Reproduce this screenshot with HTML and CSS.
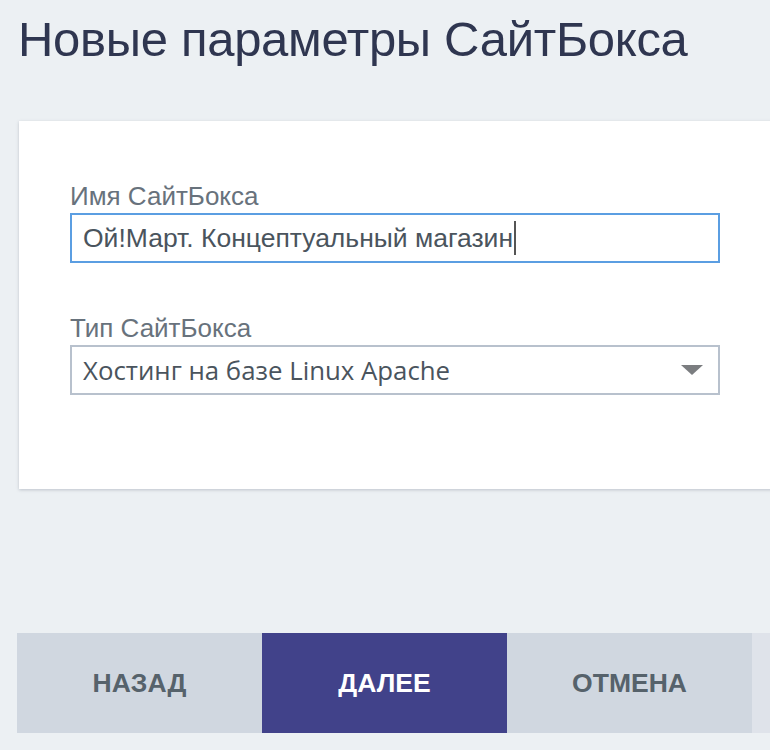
FILE: index.html
```html
<!DOCTYPE html>
<html lang="ru">
<head>
<meta charset="utf-8">
<title>Новые параметры СайтБокса</title>
<link rel="stylesheet" href="styles.css">
</head>
<body>
<div class="page">
  <h1 class="title">Новые параметры СайтБокса</h1>
  <div class="card">
    <div class="field">
      <div class="label">Имя СайтБокса</div>
      <div class="input focused"><span class="value">Ой!Март. Концептуальный магазин</span><span class="caret"></span></div>
    </div>
    <div class="field">
      <div class="label">Тип СайтБокса</div>
      <div class="input select">
        <span class="value sel">Хостинг на базе Linux Apache</span>
        <svg class="arrow" width="22" height="10" viewBox="0 0 22 10"><polygon points="0,0 22,0 11,10" fill="#7b7d80"/></svg>
      </div>
    </div>
  </div>
  <div class="actions">
    <div class="btn">НАЗАД</div>
    <div class="btn primary">ДАЛЕЕ</div>
    <div class="btn">ОТМЕНА</div>
    <div class="btn ghost"></div>
  </div>
</div>
</body>
</html>
```
FILE: styles.css
```css
html, body {
  margin: 0;
  padding: 0;
  background: #ecf0f3;
  overflow: hidden;
  height: 750px;
}
.page {
  padding-left: 18px;
  font-family: "Liberation Sans", Arial, sans-serif;
  overflow: hidden;
  height: 750px;
}
.title {
  margin: 0;
  padding-top: 11px;
  font-weight: normal;
  font-size: 49px;
  line-height: 56px;
  color: #2f3650;
  letter-spacing: -0.3px;
  white-space: nowrap;
}
.card {
  margin-top: 54px;
  margin-left: 1px;
  margin-right: -60px;
  height: 368px;
  background: #fff;
  box-shadow: 0 1px 3px rgba(120, 130, 145, 0.4);
  padding: 58px 0 0 51px;
  box-sizing: border-box;
}
.field {
  margin-bottom: 48px;
}
.label {
  font-size: 26px;
  line-height: 34px;
  color: #68727c;
}
.input {
  width: 650px;
  height: 50px;
  box-sizing: border-box;
  border: 2px solid #b8c1cd;
  display: flex;
  align-items: center;
  padding-left: 11px;
  position: relative;
}
.input.focused {
  border-color: #5b9ee2;
}
.value {
  font-size: 26.5px;
  color: #4a545d;
}
.caret {
  display: inline-block;
  width: 2px;
  height: 34px;
  background: #555;
  margin-left: 1px;
}
.select {
  justify-content: space-between;
  padding-right: 15px;
}
.sel {
  font-family: "Open Sans", "DejaVu Sans", sans-serif;
  font-size: 25.8px;
}
.actions {
  display: flex;
  margin-top: 144px;
  margin-left: -1px;
  margin-right: -40px;
}
.btn {
  width: 245px;
  height: 100px;
  flex: none;
  display: flex;
  align-items: center;
  justify-content: center;
  background: #d0d7e0;
  color: #56626b;
  font-weight: bold;
  font-size: 26.5px;
}
.btn.primary {
  background: #41428a;
  color: #fff;
}
.btn.ghost {
  background: #dfe3ea;
}
```
